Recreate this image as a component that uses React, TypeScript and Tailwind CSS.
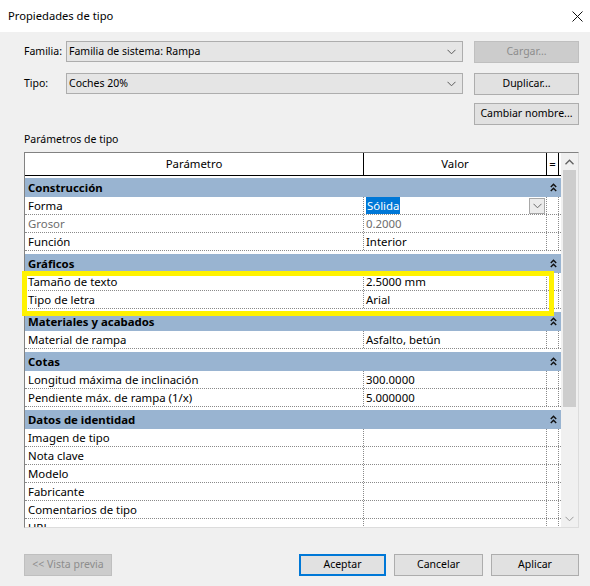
import React from 'react';

type Row = { name: string; value: string; kind?: 'select' | 'disabled' };
type Group = { title: string; rows: Row[] };

const groups: Group[] = [
    {
        title: 'Construcción',
        rows: [
            { name: 'Forma', value: 'Sólida', kind: 'select' },
            { name: 'Grosor', value: '0.2000', kind: 'disabled' },
            { name: 'Función', value: 'Interior' },
        ],
    },
    {
        title: 'Gráficos',
        rows: [
            { name: 'Tamaño de texto', value: '2.5000 mm' },
            { name: 'Tipo de letra', value: 'Arial' },
        ],
    },
    {
        title: 'Materiales y acabados',
        rows: [{ name: 'Material de rampa', value: 'Asfalto, betún' }],
    },
    {
        title: 'Cotas',
        rows: [
            { name: 'Longitud máxima de inclinación', value: '300.0000' },
            { name: 'Pendiente máx. de rampa (1/x)', value: '5.000000' },
        ],
    },
    {
        title: 'Datos de identidad',
        rows: [
            { name: 'Imagen de tipo', value: '' },
            { name: 'Nota clave', value: '' },
            { name: 'Modelo', value: '' },
            { name: 'Fabricante', value: '' },
            { name: 'Comentarios de tipo', value: '' },
            { name: 'URL', value: '' },
        ],
    },
];

function ChevronDown({ className = '' }: { className?: string }) {
    return (
        <svg width="9" height="6" viewBox="0 0 9 6" className={className}>
            <path d="M0.5 0.8 L4.5 4.8 L8.5 0.8" fill="none" stroke="currentColor" strokeWidth="1" />
        </svg>
    );
}

function ChevronUp({ className = '' }: { className?: string }) {
    return (
        <svg width="9" height="6" viewBox="0 0 9 6" className={className}>
            <path d="M0.5 5.2 L4.5 1.2 L8.5 5.2" fill="none" stroke="currentColor" strokeWidth="1.3" />
        </svg>
    );
}

function DoubleUp() {
    return (
        <svg width="7" height="9" viewBox="0 0 7 9">
            <path d="M0.8 4 L3.5 1.2 L6.2 4" fill="none" stroke="#111" strokeWidth="1.4" />
            <path d="M0.8 8 L3.5 5.2 L6.2 8" fill="none" stroke="#111" strokeWidth="1.4" />
        </svg>
    );
}

function Combo({ text }: { text: string }) {
    return (
        <div className="w-[397px] h-[21px] flex items-center justify-between bg-[#e5e5e5] border border-[#adadad] pl-[2px] pr-[6px]">
            <span>{text}</span>
            <ChevronDown className="text-[#5a5a5a]" />
        </div>
    );
}

function Btn({ label, disabled, primary, w = 'w-[105px]' }: { label: string; disabled?: boolean; primary?: boolean; w?: string }) {
    const base = `${w} h-[22px] flex items-center justify-center whitespace-nowrap`;
    if (disabled) return <div className={`${base} bg-[#cccccc] border border-[#bfbfbf] text-[#8c8c8c]`}>{label}</div>;
    if (primary) return <div className={`${base} bg-[#e1e1e1] border-2 border-[#0078d7]`}>{label}</div>;
    return <div className={`${base} bg-[#e1e1e1] border border-[#adadad]`}>{label}</div>;
}

function DataRow({ row }: { row: Row }) {
    const muted = row.kind === 'disabled';
    return (
        <div className="flex h-[18px] bg-white border-b border-dotted border-[#8a8a8a]">
            <div className={`w-[339px] pl-[3px] leading-[17px] border-r border-dotted border-[#8a8a8a] ${muted ? 'text-[#6d6d6d]' : ''}`}>
                {row.name}
            </div>
            <div className={`w-[183px] pl-[2px] leading-[17px] flex items-start justify-between pr-[1px] border-r border-dotted border-[#8a8a8a] ${muted ? 'text-[#6d6d6d]' : ''}`}>
                {row.kind === 'select' ? (
                    <>
                        <span className="bg-[#0078d7] text-white px-[1px] h-[17px]">{row.value}</span>
                        <div className="w-[16px] h-[16px] mt-[1px] bg-[#ececec] border border-[#a8a8a8] flex items-center justify-center">
                            <ChevronDown className="text-[#6a6a6a]" />
                        </div>
                    </>
                ) : (
                    <span>{row.value}</span>
                )}
            </div>
            <div className="w-[12px] border-r border-dotted border-[#8a8a8a]" />
        </div>
    );
}

function GroupRow({ title, first }: { title: string; first?: boolean }) {
    return (
        <div className={`bg-white ${first ? 'pt-[2px]' : 'pt-[3px]'}`}>
            <div className="h-[19px] bg-[#99b4d1] flex items-center justify-between font-bold pl-[3px] pr-[4px]">
                <span>{title}</span>
                <DoubleUp />
            </div>
        </div>
    );
}

export default function App() {
    return (
        <div
            className="relative w-[590px] h-[586px] bg-[#f0f0f0] text-[10.5px] text-black overflow-hidden"
            style={{ fontFamily: '"Noto Sans", "Open Sans", sans-serif' }}
        >
            {/* Title bar */}
            <div className="h-[32px] bg-white flex items-center justify-between pl-[8px] pr-[7px]">
                <span className="text-[11.2px]">Propiedades de tipo</span>
                <svg width="11" height="11" viewBox="0 0 11 11">
                    <path d="M0.5 0.5 L10.5 10.5 M10.5 0.5 L0.5 10.5" stroke="#111" strokeWidth="1" />
                </svg>
            </div>

            <div className="pl-[24px] pr-[11px]">
                {/* Familia / Tipo */}
                <div className="flex items-center mt-[9px] h-[21px]">
                    <span className="w-[42px]">Familia:</span>
                    <Combo text="Familia de sistema: Rampa" />
                    <div className="ml-[11px]">
                        <Btn label="Cargar..." disabled />
                    </div>
                </div>
                <div className="flex items-center mt-[11px] h-[21px]">
                    <span className="w-[42px]">Tipo:</span>
                    <Combo text="Coches 20%" />
                    <div className="ml-[11px]">
                        <Btn label="Duplicar..." />
                    </div>
                </div>
                <div className="flex justify-end mt-[9px]">
                    <Btn label="Cambiar nombre..." />
                </div>

                <div className="mt-[6px] h-[17px] leading-[17px]">Parámetros de tipo</div>

                {/* Table */}
                <div className="mt-[4px] w-[555px] h-[376px] flex border border-[#828282] border-r-[#dcdcdc] border-b-[#dcdcdc] bg-white text-[11.4px]">
                    <div className="w-[536px] h-full overflow-hidden">
                        <div className="flex h-[23px] bg-white border-b border-black">
                            <div className="w-[339px] flex items-center justify-center border-r border-black">Parámetro</div>
                            <div className="w-[183px] flex items-center justify-center border-r border-black">Valor</div>
                            <div className="w-[12px] flex items-center justify-center border-r border-black">=</div>
                        </div>
                        {groups.map((g, i) => (
                            <div key={g.title}>
                                <GroupRow title={g.title} first={i === 0} />
                                {g.rows.map((r) => (
                                    <DataRow key={r.name} row={r} />
                                ))}
                            </div>
                        ))}
                    </div>
                    {/* Scrollbar */}
                    <div className="w-[17px] h-full bg-[#f0f0f0] flex flex-col items-center">
                        <div className="h-[17px] flex items-center justify-center text-[#606060]">
                            <ChevronUp />
                        </div>
                        <div className="w-[13px] h-[237px] bg-[#cdcdcd]" />
                        <div className="flex-1" />
                        <div className="h-[17px] flex items-center justify-center text-[#9a9a9a]">
                            <ChevronDown />
                        </div>
                    </div>
                </div>

                {/* Bottom buttons */}
                <div className="flex items-center mt-[26px]">
                    <Btn label="<< Vista previa" disabled w="w-[88px]" />
                    <div className="flex-1" />
                    <Btn label="Aceptar" primary w="w-[87px]" />
                    <div className="ml-[8px]">
                        <Btn label="Cancelar" w="w-[89px]" />
                    </div>
                    <div className="ml-[8px]">
                        <Btn label="Aplicar" w="w-[88px]" />
                    </div>
                </div>
            </div>

            {/* Highlight annotation */}
            <div className="absolute left-[22px] top-[271px] w-[532px] h-[45px] border-[5px] border-[#fff200] pointer-events-none" />
        </div>
    );
}
